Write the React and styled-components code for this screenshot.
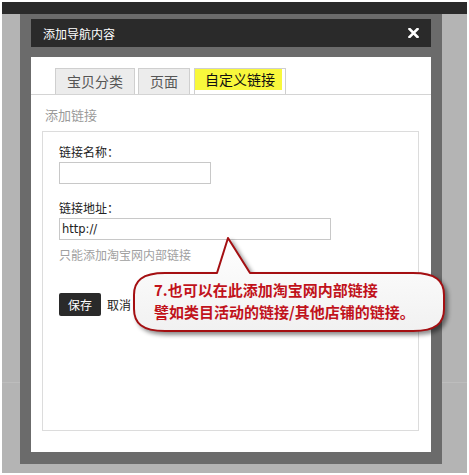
import React from "react";
import styled, { createGlobalStyle } from "styled-components";

const GlobalStyle = createGlobalStyle`
  html, body {
    margin: 0;
    padding: 0;
    background: #fff;
  }
  body {
    font-family: "Noto Sans CJK SC", "DejaVu Sans", sans-serif;
  }
  * { box-sizing: border-box; }
`;

const Page = styled.div`
  position: relative;
  width: 469px;
  height: 475px;
  padding: 2px;
`;

const Backdrop = styled.div`
  height: 100%;
  background: #b4b4b4;
  display: flex;
  flex-direction: column;
`;

const TopBar = styled.div`
  height: 12px;
  background: #2a2a2a;
`;

const Stage = styled.div`
  flex: 1;
  padding-left: 18px;
  background: linear-gradient(to bottom, transparent 368px, #bdbdbd 368px, #bdbdbd 369px, transparent 369px);
`;

const Frame = styled.div`
  width: 422px;
  height: 450px;
  background: #6b6b6b;
  padding: 5px 11px 12px 11px;
  display: flex;
  flex-direction: column;
  gap: 10px;
`;

const TitleBar = styled.div`
  height: 28px;
  background: #2a2a2a;
  color: #fff;
  display: flex;
  align-items: center;
  justify-content: space-between;
  padding: 0 12px 0 12px;
  font-size: 12px;
`;

const Body = styled.div`
  flex: 1;
  background: #fff;
  padding-top: 11px;
  display: flex;
  flex-direction: column;
`;

const Tabs = styled.div`
  display: flex;
  gap: 3px;
  padding-left: 24px;
  border-bottom: 1px solid #d4d4d4;
`;

const Tab = styled.div`
  height: 26px;
  border: 1px solid #cfcfcf;
  border-bottom: none;
  background: ${({ $active }) => ($active ? "#fff" : "#ececec")};
  color: ${({ $active }) => ($active ? "#111" : "#555")};
  font-size: 14px;
  line-height: 24px;
  padding: ${({ $active }) => ($active ? "0 3px 0 0" : "0 11px")};
  margin-left: ${({ $active }) => ($active ? "1px" : "0")};
`;

const Mark = styled.span`
  display: block;
  background: #f8f83c;
  height: 21px;
  line-height: 21px;
  padding: 0 7px 0 10px;
`;

const SectionTitle = styled.div`
  color: #9a9a9a;
  font-size: 13px;
  line-height: 20px;
  margin: 10px 0 6px 14px;
`;

const Box = styled.div`
  flex: 1;
  margin: 0 12px 21px 11px;
  border: 1px solid #dcdcdc;
  padding: 11px 16px;
  display: flex;
  flex-direction: column;
  align-items: flex-start;
`;

const Label = styled.div`
  font-size: 12px;
  line-height: 18px;
  color: #222;
  margin-top: ${({ $gap }) => $gap || 0}px;
`;

const Input = styled.div`
  width: ${({ $w }) => $w}px;
  height: 22px;
  border: 1px solid #c8c8c8;
  margin-top: 1px;
  padding-left: 2px;
  font-family: "DejaVu Sans", sans-serif;
  font-size: 11.5px;
  line-height: 20px;
  color: #222;
`;

const Hint = styled.div`
  font-size: 12px;
  line-height: 18px;
  color: #a0a0a0;
  margin-top: 6px;
`;

const Actions = styled.div`
  display: flex;
  align-items: center;
  gap: 6px;
  margin-top: 29px;
`;

const SaveButton = styled.div`
  width: 42px;
  height: 23px;
  background: #2a2a2a;
  color: #fff;
  font-size: 12px;
  line-height: 23px;
  text-align: center;
  border-radius: 2px;
`;

const CancelLink = styled.span`
  font-size: 12px;
  color: #222;
`;

const Callout = styled.div`
  position: absolute;
  left: 133px;
  top: 235px;
  width: 318px;
  height: 104px;
`;

const CalloutShape = styled.svg`
  position: absolute;
  left: 0;
  top: 0;
  filter: drop-shadow(3px 3px 2px rgba(0, 0, 0, 0.45));
`;

const CalloutText = styled.div`
  position: absolute;
  left: 21px;
  top: 44px;
  color: #c1121b;
  font-size: 15px;
  font-weight: 700;
  line-height: 22px;
  white-space: nowrap;
`;

const CloseIcon = () => (
  <svg width="11" height="10" viewBox="0 0 11 10">
    <path d="M1.5 1 L9.5 9 M9.5 1 L1.5 9" stroke="#fff" strokeWidth="2.6" strokeLinecap="square" />
  </svg>
);

// bubble with wide rounded ends and a pointer up to the url field
const CalloutBubble = () => (
  <CalloutShape width="316" height="100" viewBox="0 0 316 100">
    <defs>
      <linearGradient id="bubbleFill" x1="0" y1="0" x2="0" y2="1">
        <stop offset="0" stopColor="#ffffff" />
        <stop offset="1" stopColor="#f1f1f1" />
      </linearGradient>
    </defs>
    <path
      d="M32 38 L84 38 L95 3 L117 38 L280 38 C303 38 311 46 311 60 L311 74 C311 88 303 96 280 96 L32 96 C9 96 1 88 1 74 L1 60 C1 46 9 38 32 38 Z"
      fill="url(#bubbleFill)"
      stroke="#a40f12"
      strokeWidth="2"
      strokeLinejoin="round"
    />
  </CalloutShape>
);

const App = () => (
  <>
    <GlobalStyle />
    <Page>
      <Backdrop>
        <TopBar />
        <Stage>
          <Frame>
            <TitleBar>
              <span>添加导航内容</span>
              <CloseIcon />
            </TitleBar>
            <Body>
              <Tabs>
                <Tab>宝贝分类</Tab>
                <Tab>页面</Tab>
                <Tab $active>
                  <Mark>自定义链接</Mark>
                </Tab>
              </Tabs>
              <SectionTitle>添加链接</SectionTitle>
              <Box>
                <Label>链接名称：</Label>
                <Input $w={152} />
                <Label $gap={15}>链接地址：</Label>
                <Input $w={272}>http://</Input>
                <Hint>只能添加淘宝网内部链接</Hint>
                <Actions>
                  <SaveButton>保存</SaveButton>
                  <CancelLink>取消</CancelLink>
                </Actions>
              </Box>
            </Body>
          </Frame>
        </Stage>
      </Backdrop>
      <Callout>
        <CalloutBubble />
        <CalloutText>
          <div>7.也可以在此添加淘宝网内部链接</div>
          <div>譬如类目活动的链接/其他店铺的链接。</div>
        </CalloutText>
      </Callout>
    </Page>
  </>
);

export default App;
